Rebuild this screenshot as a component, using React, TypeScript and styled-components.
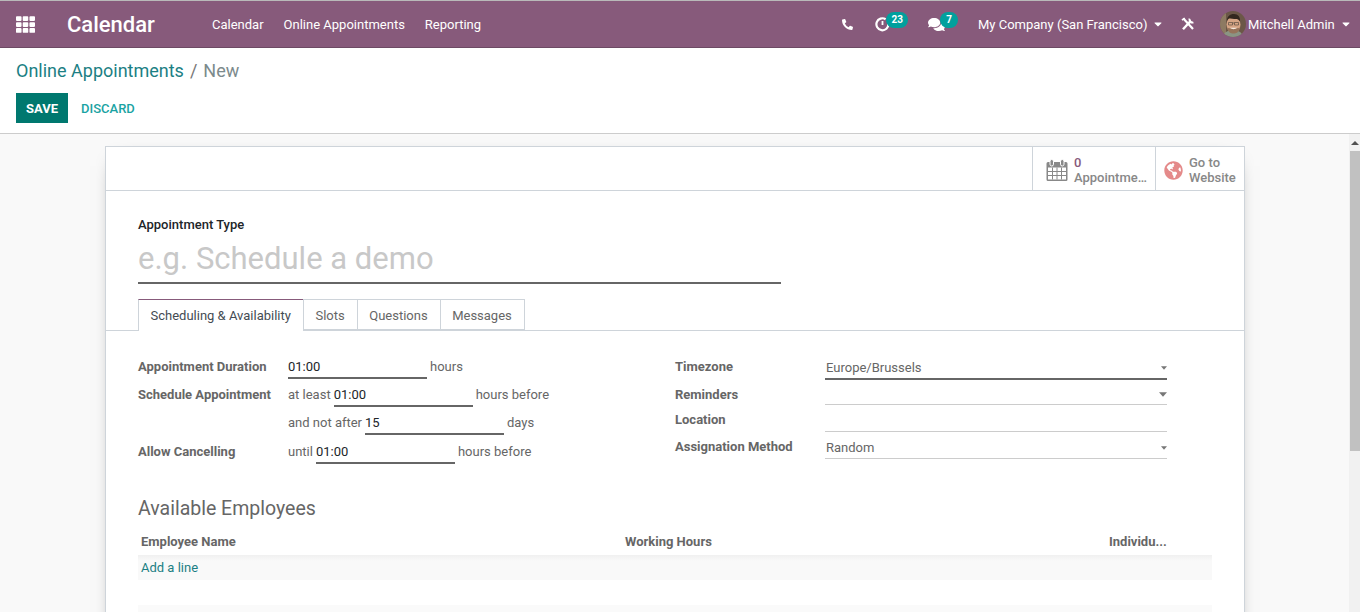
import styled, { createGlobalStyle } from "styled-components";
import { FaCaretDown, FaComments, FaGlobeAmericas, FaPhoneAlt, FaTh } from "react-icons/fa";

const GlobalStyle = createGlobalStyle`
  html, body {
    margin: 0;
    height: 612px;
    overflow: hidden;
  }
  body {
    background: #fff;
    color: #666;
    font-family: Roboto, "Liberation Sans", sans-serif;
    font-size: 13px;
  }
  * {
    box-sizing: border-box;
  }
`;

const navLinks = ["Calendar", "Online Appointments", "Reporting"];

const tabs = ["Scheduling & Availability", "Slots", "Questions", "Messages"];

const App = () => {
  return (
    <Page>
      <GlobalStyle />
      <NavBar>
        <AppsButton>
          <FaTh size={19} />
        </AppsButton>
        <Brand>Calendar</Brand>
        <NavLinks>
          {navLinks.map((link) => (
            <NavLink key={link}>{link}</NavLink>
          ))}
        </NavLinks>
        <Systray>
          <PhoneSlot>
            <FaPhoneAlt size={11} />
          </PhoneSlot>
          <ActivitySlot>
            <ActivityIcon />
            <Badge>23</Badge>
          </ActivitySlot>
          <MessageSlot>
            <FaComments size={17} />
            <Badge>7</Badge>
          </MessageSlot>
          <CompanyMenu>
            My Company (San Francisco)
            <FaCaretDown size={12} />
          </CompanyMenu>
          <ToolsSlot>
            <ToolsIcon />
          </ToolsSlot>
          <UserMenu>
            <Avatar />
            Mitchell Admin
            <FaCaretDown size={12} />
          </UserMenu>
        </Systray>
      </NavBar>
      <ControlPanel>
        <Breadcrumb>
          <CrumbLink>Online Appointments</CrumbLink>
          <CrumbSep>/</CrumbSep>
          <CrumbCurrent>New</CrumbCurrent>
        </Breadcrumb>
        <Actions>
          <SaveButton>SAVE</SaveButton>
          <DiscardButton>DISCARD</DiscardButton>
        </Actions>
      </ControlPanel>
      <Body>
        <Content>
          <Sheet>
            <ButtonBox>
              <StatButton $width={123} $inset={13}>
                <CalendarIcon />
                <StatText>
                  <StatValue>0</StatValue>
                  <span>Appointme…</span>
                </StatText>
              </StatButton>
              <StatButton $width={89} $inset={8}>
                <FaGlobeAmericas size={19} color="#e48a8a" />
                <StatText>
                  <span>Go to</span>
                  <span>Website</span>
                </StatText>
              </StatButton>
            </ButtonBox>
            <TitleBlock>
              <TitleLabel>Appointment Type</TitleLabel>
              <TitleInput>e.g. Schedule a demo</TitleInput>
            </TitleBlock>
            <TabBar>
              {tabs.map((tab, i) => (
                <Tab key={tab} $active={i === 0}>
                  {tab}
                </Tab>
              ))}
            </TabBar>
            <FormGrid>
              <FormColumn>
                <FormRow $height={28}>
                  <FieldLabel>Appointment Duration</FieldLabel>
                  <InlineValue>
                    <TimeInput>01:00</TimeInput>
                    <Unit>hours</Unit>
                  </InlineValue>
                </FormRow>
                <FormRow $height={28}>
                  <FieldLabel>Schedule Appointment</FieldLabel>
                  <InlineValue>
                    <Unit>at least</Unit>
                    <TimeInput>01:00</TimeInput>
                    <Unit>hours before</Unit>
                  </InlineValue>
                </FormRow>
                <FormRow $height={29}>
                  <FieldLabel />
                  <InlineValue>
                    <Unit>and not after</Unit>
                    <TimeInput>15</TimeInput>
                    <Unit>days</Unit>
                  </InlineValue>
                </FormRow>
                <FormRow $height={28}>
                  <FieldLabel>Allow Cancelling</FieldLabel>
                  <InlineValue>
                    <Unit>until</Unit>
                    <TimeInput>01:00</TimeInput>
                    <Unit>hours before</Unit>
                  </InlineValue>
                </FormRow>
              </FormColumn>
              <FormColumn>
                <FormRow $height={28}>
                  <FieldLabel>Timezone</FieldLabel>
                  <SelectField $active $height={21}>
                    Europe/Brussels
                    <SmallCaret />
                  </SelectField>
                </FormRow>
                <FormRow $height={25}>
                  <FieldLabel>Reminders</FieldLabel>
                  <SelectField $height={18}>
                    <SmallCaret $large />
                  </SelectField>
                </FormRow>
                <FormRow $height={27}>
                  <FieldLabel>Location</FieldLabel>
                  <SelectField $height={20} />
                </FormRow>
                <FormRow $height={27}>
                  <FieldLabel>Assignation Method</FieldLabel>
                  <SelectField $height={20}>
                    Random
                    <SmallCaret />
                  </SelectField>
                </FormRow>
              </FormColumn>
            </FormGrid>
            <SectionTitle>Available Employees</SectionTitle>
            <ListTable>
              <ListHeader>
                <HeaderCell>Employee Name</HeaderCell>
                <HeaderCell>Working Hours</HeaderCell>
                <HeaderCell>Individu...</HeaderCell>
              </ListHeader>
              <AddRow>Add a line</AddRow>
              <EmptyRow />
            </ListTable>
          </Sheet>
        </Content>
        <ScrollBar>
          <ScrollArrow />
          <ScrollThumb />
        </ScrollBar>
      </Body>
    </Page>
  );
};

export default App;

const ActivityIcon = () => (
  <svg width="15" height="15" viewBox="0 0 15 15" fill="none" stroke="#fff">
    <path d="M10.6 2.2A6 6 0 1 0 13.4 7" strokeWidth="2.2" />
    <path d="M7.5 4v4" strokeWidth="1.8" />
  </svg>
);

const ToolsIcon = () => (
  <svg width="14" height="14" viewBox="0 0 14 14" fill="none" stroke="#fff">
    <path d="M2 12.2 10 3.6" strokeWidth="2.4" />
    <path d="M8.6 1.6a3 3 0 0 0 3.8 3.8" strokeWidth="2" />
    <path d="M2.4 1.6 12 12" strokeWidth="2.2" />
    <path d="M1 3.2 3.6 1" strokeWidth="1.6" />
  </svg>
);

const CalendarIcon = () => (
  <svg width="22" height="22" viewBox="0 0 21 22" fill="none">
    <path d="M1.5 3h18a1.5 1.5 0 0 1 1.5 1.5v16a1.5 1.5 0 0 1-1.5 1.5h-18A1.5 1.5 0 0 1 0 20.500v-16A1.5 1.5 0 0 1 1.5 3z" fill="#888" />
    <rect x="1.5" y="8.5" width="18" height="12" fill="#fff" />
    <path d="M6 8.5v12M10.500 8.5v12M15 8.5v12M1.5 12.500h18M1.5 16.500h18" stroke="#888" />
    <rect x="3.5" y="0.5" width="3.5" height="6.5" rx="1.7" fill="#888" stroke="#fff" />
    <rect x="14" y="0.5" width="3.5" height="6.5" rx="1.7" fill="#888" stroke="#fff" />
  </svg>
);

const Avatar = () => (
  <svg width="26" height="26" viewBox="0 0 26 26">
    <defs>
      <clipPath id="avatar-clip">
        <circle cx="13" cy="13" r="13" />
      </clipPath>
    </defs>
    <g clipPath="url(#avatar-clip)">
      <rect width="26" height="26" fill="#6b5747" />
      <rect x="0" y="0" width="6" height="26" fill="#8d7a62" />
      <path d="M3 26c1-5 5-7 10-7s9 2 10 7z" fill="#8a9484" />
      <ellipse cx="13.5" cy="13.500" rx="7" ry="8.500" fill="#d6a585" />
      <path d="M7 10.500c-.5-5 3-7.500 7-7.500s6.500 3 6 7.500c-1-1.500-2-2.500-3.500-2.500-3 0-6-.5-7.500-.5-1 .5-1.500 1.500-2 2.500z" fill="#33281f" />
      <path d="M7 16.500c1 5 4 6 6.500 6s5.500-1 6.500-6c-1 .5-2 1-6.500 1s-5.500-.5-6.500-1z" fill="#96735a" />
      <path d="M8.500 11.500h4v2.500h-4zM14.500 11.500h4v2.500h-4zM12.500 12h2" stroke="#4a3f36" strokeWidth="0.6" fill="none" />
      <path d="M9.800 16.800c2.200 1.800 5.200 1.800 7.400 0z" fill="#f5ece2" />
    </g>
  </svg>
);

const SmallCaret = ({ $large }: { $large?: boolean }) => (
  <CaretShape $large={$large} viewBox="0 0 7 4">
    <path d="M0 0h7L3.500 4z" fill="#777" />
  </CaretShape>
);

const Page = styled.div`
  display: flex;
  flex-direction: column;
  height: 612px;
  overflow: hidden;
  border-top: 1px solid #b9b9b9;
`;

const NavBar = styled.header`
  display: flex;
  align-items: center;
  flex: none;
  height: 47px;
  background: #875a7b;
  border-bottom: 1px solid #6d4a64;
  color: #fff;
`;

const AppsButton = styled.div`
  display: flex;
  flex: none;
  width: 67px;
  padding-left: 16px;
`;

const Brand = styled.div`
  flex: none;
  width: 145px;
  font-size: 22px;
  font-weight: 500;
`;

const NavLinks = styled.nav`
  display: flex;
  gap: 20px;
`;

const NavLink = styled.span`
  font-size: 13px;
`;

const Systray = styled.div`
  display: flex;
  align-items: center;
  height: 100%;
  margin-left: auto;
  font-size: 13px;
`;

const IconSlot = styled.div`
  position: relative;
  display: flex;
  align-items: center;
`;

const PhoneSlot = styled(IconSlot)`
  width: 34px;
  padding-left: 2px;
`;

const ActivitySlot = styled(IconSlot)`
  width: 54px;
  height: 100%;
  padding-left: 1px;
`;

const MessageSlot = styled(IconSlot)`
  width: 50px;
  height: 100%;
`;

const Badge = styled.span`
  position: absolute;
  top: 11px;
  left: 12px;
  min-width: 18px;
  padding: 0 5.5px;
  border-radius: 8px;
  background: #00a09d;
  color: #fff;
  font-size: 10px;
  font-weight: 700;
  line-height: 16px;
  text-align: center;
`;

const CompanyMenu = styled.div`
  display: flex;
  align-items: center;
  gap: 5px;
  width: 203px;
`;

const ToolsSlot = styled(IconSlot)`
  width: 39px;
`;

const UserMenu = styled.div`
  display: flex;
  align-items: center;
  gap: 2px;
  width: 140px;

  svg:last-child {
    margin-left: 3px;
  }
`;

const ControlPanel = styled.section`
  flex: none;
  height: 86px;
  padding: 12px 16px 0;
  background: #fff;
  border-bottom: 1px solid #ccc;
`;

const Breadcrumb = styled.div`
  display: flex;
  gap: 6px;
  height: 21px;
  font-size: 18px;
  line-height: 21px;
`;

const CrumbLink = styled.span`
  color: #1c7f84;
`;

const CrumbSep = styled.span`
  color: #777;
`;

const CrumbCurrent = styled.span`
  color: #7c8a8c;
`;

const Actions = styled.div`
  display: flex;
  margin-top: 12px;
`;

const SaveButton = styled.div`
  width: 52px;
  height: 30px;
  background: #00786f;
  color: #fff;
  font-size: 13px;
  font-weight: 700;
  line-height: 31px;
  text-align: center;
`;

const DiscardButton = styled.div`
  margin-left: 13px;
  color: #1aa3a3;
  font-size: 13px;
  font-weight: 500;
  line-height: 31px;
`;

const Body = styled.main`
  display: flex;
  flex: 1;
  min-height: 0;
  background: #f9f9f9;
`;

const Content = styled.div`
  flex: 1;
  padding: 12px 104px 0 105px;
  overflow: hidden;
`;

const Sheet = styled.div`
  width: 1140px;
  height: 600px;
  background: #fff;
  border: 1px solid #ced4da;
  box-shadow: 0 5px 20px -15px #000;
`;

const ButtonBox = styled.div`
  display: flex;
  justify-content: flex-end;
  height: 44px;
  border-bottom: 1px solid #ced4da;
`;

const StatButton = styled.div<{ $width: number; $inset: number }>`
  display: flex;
  align-items: center;
  gap: 6px;
  width: ${({ $width }) => $width}px;
  padding: 3px 0 0 ${({ $inset }) => $inset}px;
  border-left: 1px solid #ced4da;
  color: #888;
`;

const StatText = styled.div`
  display: flex;
  flex-direction: column;
  font-size: 13px;
  font-weight: 500;
  line-height: 15px;
`;

const StatValue = styled.span`
  color: #875a7b;
`;

const TitleBlock = styled.div`
  padding: 26px 0 0 32px;
`;

const TitleLabel = styled.div`
  color: #212529;
  font-size: 13px;
  font-weight: 500;
  line-height: 16px;
`;

const TitleInput = styled.div`
  width: 643px;
  height: 47px;
  margin-top: 4px;
  border-bottom: 2px solid #666;
  color: #c8c8c8;
  font-size: 31px;
  line-height: 44px;
`;

const TabBar = styled.div`
  display: flex;
  height: 32px;
  margin-top: 15px;
  padding-left: 32px;
  border-bottom: 1px solid #ced4da;
`;

const Tab = styled.div<{ $active?: boolean }>`
  height: ${({ $active }) => ($active ? 32 : 31)}px;
  margin-left: ${({ $active }) => ($active ? 0 : -1)}px;
  padding: 0 12px 0 11.5px;
  background: #fff;
  border: 1px solid #ced4da;
  border-top-color: ${({ $active }) => ($active ? "#875a7b" : "#ced4da")};
  border-bottom: ${({ $active }) => ($active ? "0" : "1px solid #ced4da")};
  color: ${({ $active }) => ($active ? "#444b53" : "#666")};
  line-height: 31px;
`;

const FormGrid = styled.div`
  display: grid;
  grid-template-columns: 537px 492px;
  padding: 28px 0 0 32px;
`;

const FormColumn = styled.div`
  display: flex;
  flex-direction: column;
`;

const FormRow = styled.div<{ $height: number }>`
  display: flex;
  height: ${({ $height }) => $height}px;
`;

const FieldLabel = styled.div`
  flex: none;
  width: 150px;
  font-weight: 700;
  line-height: 16px;
`;

const InlineValue = styled.div`
  display: flex;
  gap: 3px;
`;

const Unit = styled.span`
  line-height: 16px;
`;

const TimeInput = styled.div`
  width: 139px;
  height: 20px;
  border-bottom: 2px solid #666;
  color: #212529;
  line-height: 16px;
`;

const SelectField = styled.div<{ $active?: boolean; $height: number }>`
  display: flex;
  align-items: center;
  justify-content: space-between;
  width: 342px;
  height: ${({ $height }) => $height}px;
  padding: 0 0 2px 1px;
  border-bottom: ${({ $active }) => ($active ? "2px solid #666" : "1px solid #ccc")};
`;

const CaretShape = styled.svg<{ $large?: boolean }>`
  width: ${({ $large }) => ($large ? 8 : 6)}px;
  height: ${({ $large }) => ($large ? 5 : 4)}px;
  margin-left: auto;
  margin-right: 0;
`;

const SectionTitle = styled.h2`
  margin: 25px 0 0 32px;
  color: #666;
  font-size: 19.5px;
  font-weight: 400;
  line-height: 24px;
`;

const ListTable = styled.div`
  width: 1074px;
  margin: 13px 0 0 32px;
`;

const ListHeader = styled.div`
  display: grid;
  grid-template-columns: 484px 484px 1fr;
  height: 21px;
  padding-left: 3px;
`;

const HeaderCell = styled.div`
  font-weight: 700;
  line-height: 16px;
`;

const AddRow = styled.div`
  height: 25px;
  padding-left: 3px;
  background: linear-gradient(#f0f0f0, #f9f9f9 6px);
  color: #1c7f84;
  line-height: 25px;
`;

const EmptyRow = styled.div`
  height: 25px;
  margin-top: 25px;
  background: #fafafa;
`;

const ScrollBar = styled.div`
  display: flex;
  flex: none;
  flex-direction: column;
  width: 11px;
  background: #f1f1f1;
`;

const ScrollArrow = styled.div`
  align-self: center;
  width: 0;
  height: 0;
  margin: 7px 0 6px;
  border-right: 4px solid transparent;
  border-bottom: 4px solid #505050;
  border-left: 4px solid transparent;
`;

const ScrollThumb = styled.div`
  height: 300px;
  margin-left: 1px;
  background: #c1c1c1;
`;
